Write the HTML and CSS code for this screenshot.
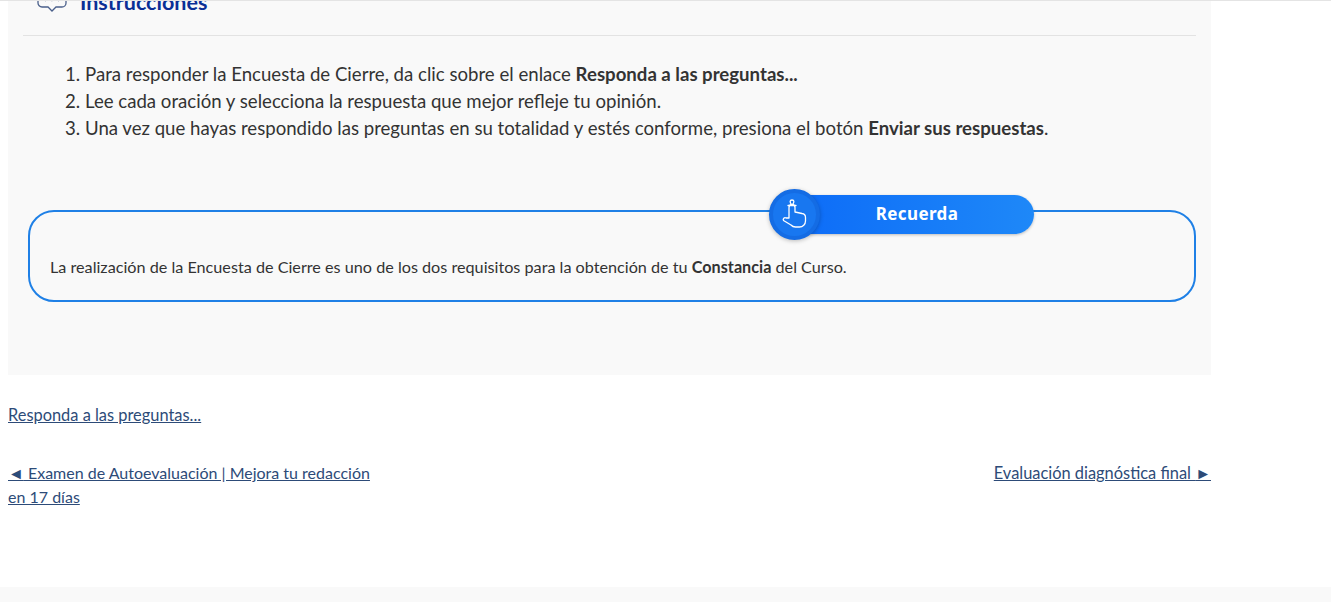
FILE: index.html
```html
<!DOCTYPE html>
<html lang="es">
<head>
<meta charset="utf-8">
<title>Encuesta de Cierre</title>
<link rel="stylesheet" href="styles.css">
</head>
<body>
<div class="topline"></div>
<main class="content">
  <section class="panel">
    <header class="panel-head">
      <svg class="head-icon" width="30" height="24" viewBox="0 0 30 24" fill="none" stroke="#4a5f8a" stroke-width="1.3">
        <path d="M5 3h20a4 4 0 0 1 4 4v5a4 4 0 0 1-4 4h-6l-4 4-4-4H5a4 4 0 0 1-4-4V7a4 4 0 0 1 4-4z"/>
        <path d="M8 9.500h.8M14.500 9.500h.8M21 9.500h.8"/>
      </svg>
      <h2 class="head-title">Instrucciones</h2>
    </header>
    <ol class="steps">
      <li>Para responder la Encuesta de Cierre, da clic sobre el enlace <b>Responda a las preguntas...</b></li>
      <li>Lee cada oración y selecciona la respuesta que mejor refleje tu opinión.</li>
      <li>Una vez que hayas respondido las preguntas en su totalidad y estés conforme, presiona el botón <b>Enviar sus respuestas</b>.</li>
    </ol>
    <div class="reminder">
      <p>La realización de la Encuesta de Cierre es uno de los dos requisitos para la obtención de tu <b>Constancia</b> del Curso.</p>
      <div class="badge">
        <span class="badge-circle">
          <svg width="30" height="32" viewBox="0 0 30 32" fill="none" stroke="#fff" stroke-width="1.300" stroke-linejoin="round" stroke-linecap="round">
            <path d="M9 19V8.500a3 3 0 0 1 6 0V13l7 1.500a4 4 0 0 1 3.500 4V22a6 6 0 0 1-6 6h-4a6 6 0 0 1-4.500-2L3.500 21.500c-1-1.500 1-3.500 2.500-2.500z"/>
            <path d="M12 6.500C9 3 10 1 12 1s3 2 0 5.500zM8 6.500h8"/>
          </svg>
        </span>
        <span class="badge-label">Recuerda</span>
      </div>
    </div>
  </section>
  <p class="answer"><a href="#">Responda a las preguntas...</a></p>
  <nav class="pager">
    <a class="prev" href="#"><span class="arrow">◄</span> Examen de Autoevaluación | Mejora tu redacción en 17 días</a>
    <a class="next" href="#">Evaluación diagnóstica final <span class="arrow">►</span></a>
  </nav>
</main>
<footer class="foot"></footer>
</body>
</html>
```
FILE: styles.css
```css
* { box-sizing: border-box; }
html, body { margin: 0; padding: 0; }
body {
  height: 602px;
  overflow: hidden;
  background: #fff;
  font-family: "Lato", "Liberation Sans", sans-serif;
  color: #333;
  display: flex;
  flex-direction: column;
}
.topline { height: 1px; background: #e4e4e4; flex: none; position: relative; z-index: 1; }
.content { flex: 1; width: 1211px; padding-left: 8px; }
.panel {
  background: #f9f9f9;
  height: 374px;
  padding: 0 15px;
  overflow: hidden;
}
.panel-head {
  height: 35px;
  border-bottom: 1px solid #e3e3e3;
  display: flex;
  gap: 13px;
  padding-left: 14px;
  align-items: flex-end;
  padding-bottom: 21px;
}
.head-icon { flex: none; margin-bottom: -1px; }
.head-title {
  margin: 0;
  font-size: 21.500px;
  line-height: 24px;
  font-weight: 700;
  color: #0a2f96;
  white-space: nowrap;
}
.steps {
  margin: 25px 0 0;
  padding: 0 0 0 62px;
  font-size: 18.620px;
  line-height: 27px;
  color: #333;
}
.steps b, .reminder b { font-weight: 700; }
.reminder {
  position: relative;
  margin: 68px 0 0 5px;
  width: 1168px;
  height: 92px;
  border: 2px solid #1f80e6;
  border-radius: 26px;
  padding: 45px 20px 0;
  font-size: 16.200px;
  line-height: 20px;
}
.reminder p { margin: 0; }
.badge {
  position: absolute;
  left: 739px;
  top: -23px;
  width: 265px;
  height: 50px;
  display: flex;
  align-items: center;
}
.badge-circle {
  position: absolute;
  left: 0;
  top: 0;
  width: 51px;
  height: 51px;
  border-radius: 50%;
  background: #1877f0;
  border: 4px solid #146ce4;
  box-shadow: 0 1px 4px rgba(0, 0, 0, .25);
  display: flex;
  align-items: center;
  justify-content: center;
  z-index: 1;
}
.badge-label {
  margin: 0 0 0 25px;
  width: 240px;
  height: 39px;
  border-radius: 0 20px 20px 0;
  background: linear-gradient(90deg, #0d6cf8, #1e88f8);
  box-shadow: 0 1px 3px rgba(0, 0, 0, .25);
  color: #fff;
  font-family: "Noto Sans", sans-serif;
  font-weight: 700;
  font-size: 17px;
  letter-spacing: .4px;
  display: flex;
  align-items: center;
  justify-content: center;
  padding-left: 6px;
}
a { color: #2d4b78; text-decoration: underline; }
.arrow { font-family: "Liberation Sans", sans-serif; font-size: 16px; line-height: 0; }
.answer { margin: 28px 0 0; font-size: 16.400px; line-height: 24px; }
.pager {
  margin-top: 34px;
  display: flex;
  justify-content: space-between;
  font-size: 16.400px;
  line-height: 24px;
}
.prev { width: 372px; font-size: 16px; }
.foot { height: 15px; background: #f9f9f9; flex: none; }
```
